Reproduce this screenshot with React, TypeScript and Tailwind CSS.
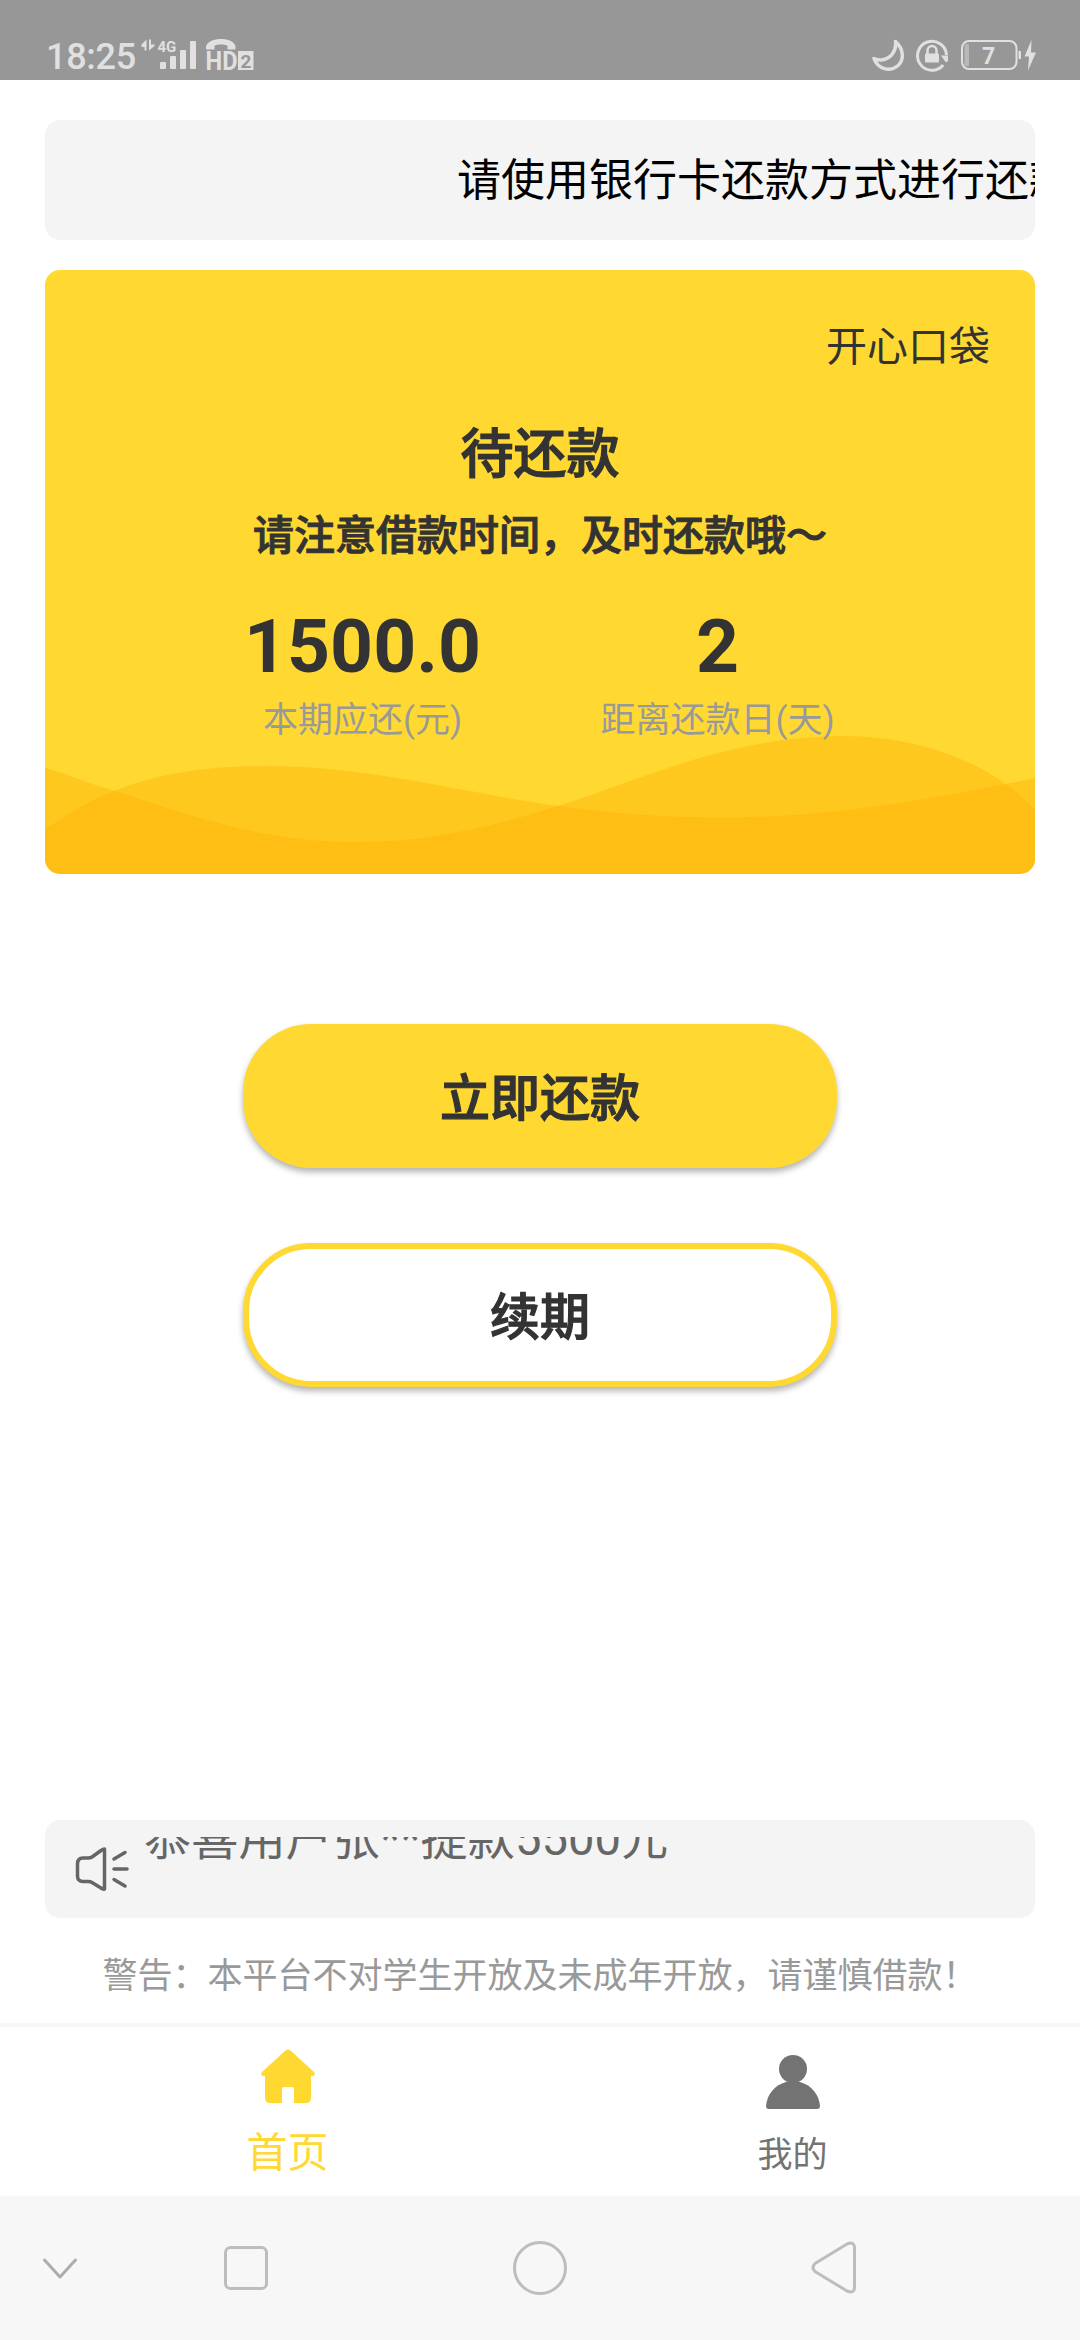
const notices = {
  marquee: "请使用银行卡还款方式进行还款",
  ticker: "恭喜用户张**提款5500元",
  warning: "警告：本平台不对学生开放及未成年开放，请谨慎借款！",
};

const stats = [
  { value: "1500.0", label: "本期应还(元)" },
  { value: "2", label: "距离还款日(天)" },
];

const SignalIcons = () => (
  <svg
    className="ml-[6px] h-[34px] w-[114px] overflow-visible"
    viewBox="141 38 114 34"
    fill="#e0e0e0"
    fontFamily="Roboto, sans-serif"
    fontWeight="700"
  >
    <path d="M146.5 39.5V50.5H144.5V47H141.5V44.5ZM149 39.5V50.5L154.5 46V44.5H151V39.5Z" />
    <text x="157.5" y="51.5" fontSize="15">
      4G
    </text>
    <rect x="160" y="62" width="6" height="7" rx="1" />
    <rect x="170" y="56" width="6" height="13" rx="1" />
    <rect x="180" y="50" width="6" height="19" rx="1" />
    <rect x="190" y="41" width="6" height="28" rx="1" />
    <path d="M206 49.5V46C208 41.5 214 39 221 39S234 41.5 235.5 46V49.5H227.5V45.5C224 44 218 44 214.5 45.5V49.5Z" />
    <text
      x="205.5"
      y="70"
      fontSize="25"
      textLength="32"
      lengthAdjust="spacingAndGlyphs"
    >
      HD
    </text>
    <rect x="238" y="51" width="15.5" height="19" />
    <text x="240.5" y="67.5" fontSize="19" fill="#979797">
      2
    </text>
  </svg>
);

const MoonIcon = () => (
  <svg className="h-[34px] w-[34px]" viewBox="0 0 34 34" fill="none">
    <path
      d="M24.5 3.5C33 11 33.5 22 26.5 28C19 34 7 31.5 3 20.5C10 23.5 17 21.5 21 16.5C24 12.5 25.3 8 24.5 3.5Z"
      stroke="#e0e0e0"
      strokeWidth="3.5"
      strokeLinejoin="round"
    />
  </svg>
);

const RotationLockIcon = () => (
  <svg className="h-[34px] w-[34px]" viewBox="0 0 34 34" fill="none">
    <path
      d="M28.2 27A14.5 14.5 0 1 1 31.5 17"
      stroke="#e0e0e0"
      strokeWidth="3"
    />
    <path d="M26 17.5H33V23.5L30.5 24Z" fill="#e0e0e0" />
    <rect x="10" y="15.5" width="14" height="9" rx="1" fill="#e0e0e0" />
    <path
      d="M12.5 16V12.5A4.5 4.5 0 0 1 21.5 12.5V16"
      stroke="#e0e0e0"
      strokeWidth="2.5"
    />
  </svg>
);

const BatteryIcon = () => (
  <svg className="h-[34px] w-[76px]" viewBox="960 38 76 34" fill="none">
    <rect
      x="961"
      y="41"
      width="54.5"
      height="28"
      rx="7"
      stroke="#e0e0e0"
      strokeWidth="2"
    />
    <rect x="963.5" y="44" width="4.5" height="22" rx="1" fill="#b8b8b8" />
    <text
      x="987.5"
      y="64"
      fontSize="23"
      fontWeight="700"
      fontFamily="Roboto, sans-serif"
      textAnchor="middle"
      fill="#e0e0e0"
    >
      7
    </text>
    <rect x="1017.5" y="51" width="2.5" height="8" fill="#e0e0e0" />
    <path
      d="M1030.5 40L1023.5 56.5H1028L1027 70.5L1035 52.5H1030Z"
      fill="#e0e0e0"
    />
  </svg>
);

const StatusBar = () => (
  <header className="flex h-20 items-start justify-between bg-[#979797] pl-[46px] pr-[43px] pt-[38px] text-[#e0e0e0]">
    <div className="flex">
      <span className="w-[89px] text-[36px] font-medium leading-[39px] tracking-[-0.3px]">
        18:25
      </span>
      <SignalIcons />
    </div>
    <div className="flex">
      <MoonIcon />
      <div className="ml-[10px]">
        <RotationLockIcon />
      </div>
      <div className="ml-[12px]">
        <BatteryIcon />
      </div>
    </div>
  </header>
);

const Waves = () => (
  <svg
    className="absolute inset-x-0 bottom-0 h-[139px] w-full"
    viewBox="45 735 990 139"
    preserveAspectRatio="none"
    fill="#ffad00"
    fillOpacity="0.38"
  >
    <path d="M45 767.5C70 775 90 784 115 791C190 815 260 842 358 842C430 842 490 827 558 806C640 780 730 736 844 736C930 736 1000 770 1035 810V874H45Z" />
    <path d="M45 829C75 811 90 799 115 791C155 774 205 766 268 766C370 766 470 794 558 806C610 813 660 817.5 723 817.5C840 817.5 950 795 1035 778V874H45Z" />
  </svg>
);

const LoanCard = () => (
  <section className="relative mt-[30px] h-[604px] overflow-hidden rounded-[15px] bg-[#ffd932] text-[#333]">
    <Waves />
    <div className="relative flex flex-col items-center">
      <p className="mt-[47px] self-end pr-[45px] text-[41px] leading-[60px]">
        开心口袋
      </p>
      <h1 className="mt-[39px] text-[53px] font-medium leading-[78px] [-webkit-text-stroke:1.2px_#333]">
        待还款
      </h1>
      <p className="mt-[12px] text-[41px] font-medium leading-[60px] [-webkit-text-stroke:1px_#333]">
        请注意借款时间，及时还款哦～
      </p>
      <div className="flex w-full justify-center gap-[115px]">
        {stats.map((stat) => (
          <div
            key={stat.label}
            className="flex w-[240px] flex-col items-center"
          >
            <span className="mt-[36px] text-[75px] font-bold leading-[88px]">
              {stat.value}
            </span>
            <span className="mt-[5px] whitespace-nowrap text-[35px] leading-[52px] text-[#999]">
              {stat.label}
            </span>
          </div>
        ))}
      </div>
    </div>
  </section>
);

const SpeakerIcon = () => (
  <svg
    className="h-[46px] w-[54px]"
    viewBox="75 1847 54 46"
    fill="none"
    stroke="#666"
    strokeWidth="3.5"
    strokeLinecap="round"
    strokeLinejoin="round"
  >
    <path d="M104.5 1850V1890Q103 1890.5 101 1889L92 1883.5Q90.5 1882.5 88 1882.5H83Q77.5 1882.5 77.5 1877V1865Q77.5 1859 83 1859H88Q90.5 1859 92 1858L101 1851.5Q103 1850 104.5 1850Z" />
    <path d="M114 1860L125 1853.5M114 1870H127M114 1880.5L125 1887" />
  </svg>
);

const TabBar = () => (
  <nav className="flex h-[169px] bg-white px-[35px]">
    <div className="flex flex-1 flex-col items-center text-[#ffd932]">
      <svg
        className="mt-[22px] h-[54px] w-[54px]"
        viewBox="0 0 54 54"
        fill="currentColor"
      >
        <path d="M24.5 1.5Q27 -0.5 29.5 1.5L53 23Q55 26 52 27H50V49Q50 54 45 54H33V40Q33 38 31 38H23Q21 38 21 40V54H9Q4 54 4 49V27H2Q-1 26 1 23Z" />
      </svg>
      <span className="mt-[20px] text-[41px] leading-[60px]">首页</span>
    </div>
    <div className="flex flex-1 flex-col items-center text-[#737373]">
      <svg
        className="mt-[28px] h-[54px] w-[54px]"
        viewBox="0 0 54 54"
        fill="currentColor"
      >
        <ellipse cx="27" cy="14" rx="14" ry="14" />
        <path d="M20 27H34C45 30 53 39 54 51Q54 54 51 54H3Q0 54 0 51C1 39 9 30 20 27Z" />
      </svg>
      <span className="mt-[21px] text-[35px] leading-[52px]">我的</span>
    </div>
  </nav>
);

const SystemNav = () => (
  <footer className="flex h-36 bg-[#f7f7f7]">
    <svg
      className="h-36 w-full"
      viewBox="0 2196 1080 144"
      fill="none"
      stroke="#bdbdbd"
      strokeWidth="3"
      strokeLinejoin="round"
      strokeLinecap="round"
    >
      <path d="M44.5 2260L60 2277L75.5 2260" stroke="#adadad" />
      <rect x="225.5" y="2247.5" width="41" height="41" rx="5" />
      <circle cx="540" cy="2268" r="25.5" />
      <path d="M815 2263.5L847 2244Q854.5 2241 854.5 2248V2287Q854.5 2294 847 2291L815 2271.5Q811 2267.5 815 2263.5Z" />
    </svg>
  </footer>
);

const App = () => {
  return (
    <div className="flex h-[2340px] w-[1080px] flex-col overflow-hidden bg-white font-[Roboto,'Noto_Sans_CJK_SC',sans-serif]">
      <StatusBar />
      <main className="flex flex-1 flex-col px-[45px] pt-10">
        <div className="h-[120px] overflow-hidden rounded-[15px] bg-[#f4f4f4] pl-[412px]">
          <p className="whitespace-nowrap text-[44px] leading-[122px] text-black">
            {notices.marquee}
          </p>
        </div>
        <LoanCard />
        {/* Actions */}
        <div className="mt-[150px] flex flex-col items-center gap-[75px] text-[50px] font-medium text-[#333] [-webkit-text-stroke:1.2px_#333]">
          <button className="h-[144px] w-[594px] rounded-[68px] bg-[#ffd932] pt-[7px] shadow-[0_4px_6px_rgba(0,0,0,0.3)]">
            立即还款
          </button>
          <button className="h-[144px] w-[594px] rounded-[68px] border-[6px] border-[#ffd932] bg-white pt-[7px] shadow-[0_4px_6px_rgba(0,0,0,0.3)]">
            续期
          </button>
        </div>
        {/* Ticker, the line is scrolling out at the top */}
        <div className="mt-auto flex h-[98px] items-center gap-[15px] rounded-[15px] bg-[#f4f4f4] px-[30px]">
          <SpeakerIcon />
          <div className="h-[64px] flex-1 overflow-hidden">
            <p className="mt-[-33px] whitespace-nowrap text-[47.2px] leading-[70px] text-[#666]">
              {notices.ticker}
            </p>
          </div>
        </div>
        <p className="mb-[20px] mt-[33px] whitespace-nowrap text-center text-[35px] leading-[52px] text-[#999]">
          {notices.warning}
        </p>
      </main>
      <div className="h-[4px] bg-[#f7f7f7]" />
      <TabBar />
      <SystemNav />
    </div>
  );
};

export default App;
